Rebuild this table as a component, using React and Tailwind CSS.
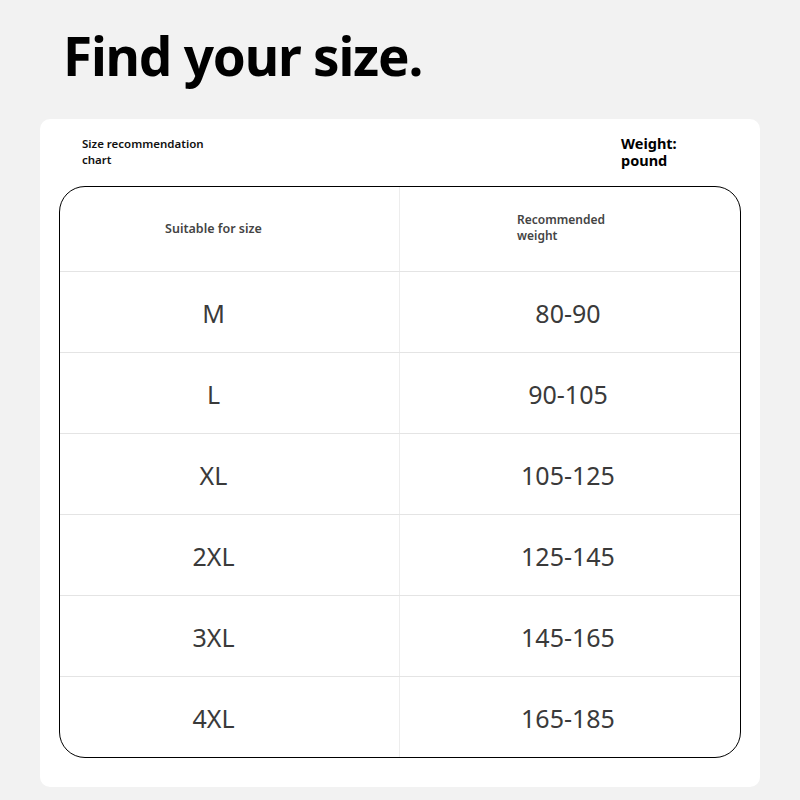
const rows = [
  { size: "M", weight: "80-90" },
  { size: "L", weight: "90-105" },
  { size: "XL", weight: "105-125" },
  { size: "2XL", weight: "125-145" },
  { size: "3XL", weight: "145-165" },
  { size: "4XL", weight: "165-185" },
];

export default function App() {
  return (
    <div
      className="w-[800px] h-[800px] bg-[#f2f2f2] flex flex-col"
      style={{ fontFamily: '"Noto Sans", "Open Sans", sans-serif' }}
    >
      {/* title */}
      <h1 className="pl-[63px] pt-[24px] h-[119px] text-[53px] leading-[64px] font-bold text-black tracking-[-1.2px]">
        Find your size.
      </h1>

      {/* card */}
      <div className="mx-[40px] h-[668px] bg-white rounded-[10px] flex flex-col">
        <div className="flex h-[67px] pt-[17px]">
          <p className="ml-[42px] w-[140px] text-[11.5px] leading-[16px] font-semibold text-[#111]">
            Size recommendation chart
          </p>
          <p className="ml-[399px] -mt-[1px] text-[14.5px] leading-[17px] font-bold text-black">
            Weight:
            <br />
            pound
          </p>
        </div>

        <div className="ml-[19px] w-[682px] border-[1.5px] border-black rounded-[26px] overflow-hidden">
          {/* header */}
          <div className="flex h-[85px] border-b border-[#e4e4e4]">
            <div className="w-[340px] flex items-center justify-center pr-[32px] border-r border-[#ededed]">
              <span className="text-[12.5px] font-semibold text-[#444]">Suitable for size</span>
            </div>
            <div className="flex-1 flex items-center pl-[117px] pb-[3px]">
              <span className="text-[12px] leading-[16px] font-semibold text-[#444]">
                Recommended
                <br />
                weight
              </span>
            </div>
          </div>

          {rows.map((r, i) => (
            <div
              key={r.size}
              className={
                i < rows.length - 1
                  ? "flex h-[81px] border-b border-[#e4e4e4]"
                  : "flex h-[80px]"
              }
            >
              <div className="w-[340px] flex items-center justify-center pr-[32px] pt-[4px] border-r border-[#ededed]">
                <span className="text-[25px] text-[#3a3a3a]">{r.size}</span>
              </div>
              <div className="flex-1 flex items-center justify-center pr-[4px] pt-[4px]">
                <span className="text-[25px] text-[#3a3a3a]">{r.weight}</span>
              </div>
            </div>
          ))}
        </div>
      </div>
    </div>
  );
}
